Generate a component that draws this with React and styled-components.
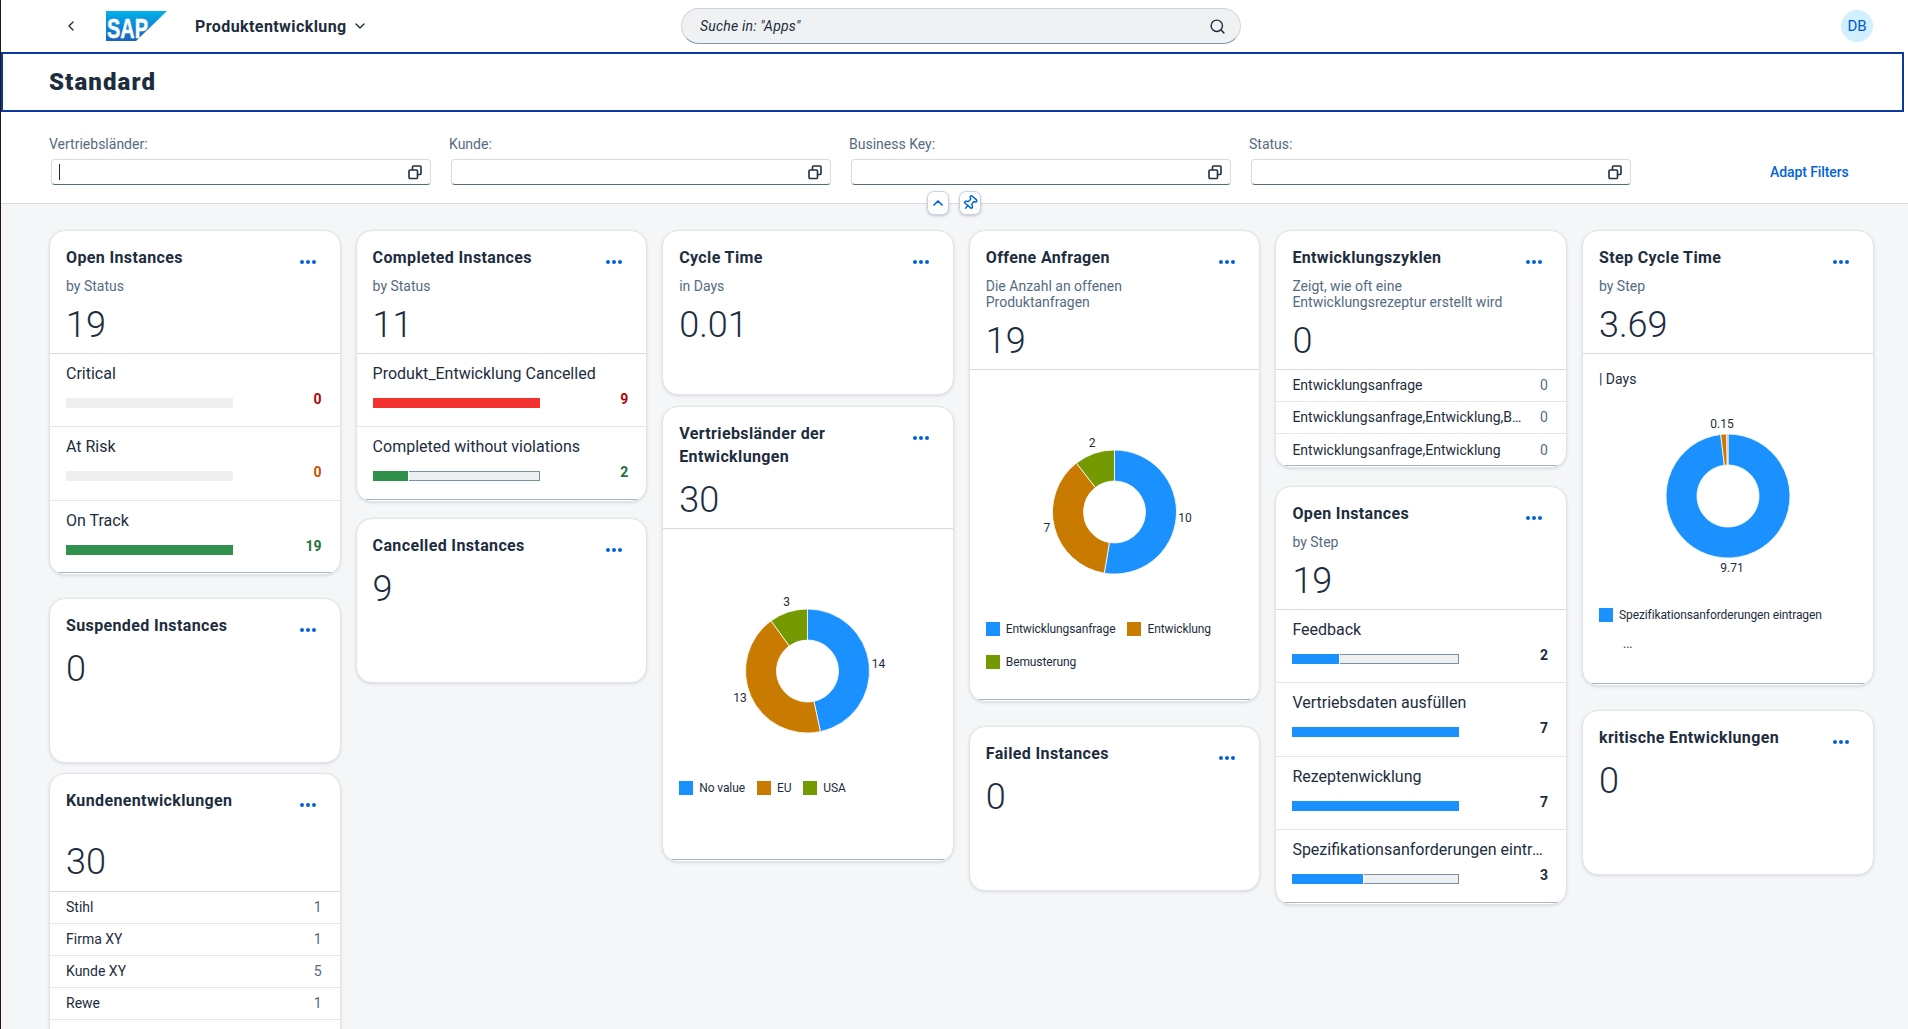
import React from "react";
import styled, { createGlobalStyle } from "styled-components";
import { ChevronLeft, ChevronDown, ChevronUp, Search, Pin } from "lucide-react";

const FONT = `Roboto, "Liberation Sans", Arial, sans-serif`;

const Global = createGlobalStyle`
  html, body { margin: 0; padding: 0; height: 100%; overflow: hidden; background: #f5f6f7; }
  body { font-family: ${FONT}; color: #1d2d3e; }
  * { box-sizing: border-box; }
`;

const Page = styled.div`
  width: 1908px; height: 1029px; overflow: hidden; background: #f5f6f7;
  border-left: 1px solid #2e1414; display: flex; flex-direction: column;
`;
const Shell = styled.header`
  height: 52px; flex: none; background: #fff; display: flex; align-items: center; position: relative;
`;
const BackBtn = styled.div`
  width: 18px; margin-left: 61px; display: flex; justify-content: center; color: #1d2d3e;
`;
const LogoWrap = styled.div`margin-left: 26px; height: 40px; display: flex;`;
const AppTitle = styled.div`
  margin-left: 28px; display: flex; align-items: center; gap: 5px; font-size: 16px; font-weight: 700; letter-spacing: .42px; color: #1d2d3e; width: 181px; white-space: nowrap;
`;
const SearchBox = styled.div`
  margin-left: 305px; width: 560px; height: 36px; border-radius: 18px; background: #eff1f2;
  border: 1px solid #d0d4d9; border-bottom-color: #8396a8; display: flex; align-items: center;
  justify-content: space-between; padding: 0 14px 0 18px;
`;
const SearchText = styled.span`font-size: 14px; font-style: italic; letter-spacing: .2px; color: #1d2d3e;`;
const Avatar = styled.div`
  margin-left: auto; margin-right: 35px; width: 32px; height: 32px; border-radius: 50%; background: #d1efff;
  color: #0057d2; font-size: 15px; display: flex; align-items: center; justify-content: center;
`;
const TitleBar = styled.div`
  height: 60px; flex: none; width: 1903px; background: #fff; border: 2px solid #0a3a9e; display: flex; align-items: center;
  padding-left: 46px; font-size: 24px; font-weight: 900; letter-spacing: 1.1px; color: #1d2d3e;
`;
const TitleTail = styled.div`height: 60px; width: 5px; background: #fff; flex: none;`;
const TitleRow = styled.div`display: flex; flex: none;`;
const FilterBar = styled.div`
  height: 92px; flex: none; background: #fff; border-bottom: 1px solid #d9dcdf; display: flex; padding: 23px 0 0 48px; position: relative;
`;
const Filter = styled.div`width: 400px; flex: none;`;
const FilterLabel = styled.div`font-size: 14px; line-height: 18px; color: #556b82;`;
const FilterInput = styled.div`
  margin: 6px 0 0 2px; width: 380px; height: 26px; background: #fff; border: 1px solid #d8dbe0; border-bottom-color: #556b82;
  border-radius: 4px; display: flex; align-items: center; justify-content: space-between; padding: 0 7px 0 7px;
`;
const Caret = styled.span`width: 1px; height: 16px; background: ${p => (p.$on ? "#1d2d3e" : "transparent")};`;
const AdaptBtn = styled.div`
  position: absolute; left: 1769px; top: 52px; font-size: 14px; font-weight: 500; letter-spacing: -.1px; color: #0064d9;
`;
const Toggles = styled.div`
  position: absolute; left: 926px; top: 79px; display: flex; gap: 10px;
`;
const ToggleBtn = styled.div`
  width: 22px; height: 24px; background: #fff; border: 1px solid #cdd3da; border-radius: 7px; color: #0064d9;
  box-shadow: 0 1px 3px rgba(85,107,130,.35); display: flex; align-items: center; justify-content: center;
`;
const Board = styled.main`display: flex; gap: 15px; padding: 26px 0 0 48px; flex: 1; min-height: 0;`;
const Column = styled.div`width: 291.6px; flex: none; display: flex; flex-direction: column;`;
const Card = styled.section`
  width: 100%; flex: none; height: ${p => p.$h}px; margin-top: ${p => p.$mt || 0}px; background: #fff; border-radius: 16px;
  border: 1px solid #e2e5e8; box-shadow: 0 1px 3px rgba(85,107,130,.2); overflow: hidden; position: relative;
  ${p => p.$line && `&::after { content: ""; position: absolute; left: 0; right: 0; bottom: 1px; height: 1px; background: #a9b4be; }`}
`;
const Head = styled.div`
  padding: 15px 16px 0; position: relative; border-bottom: ${p => (p.$div ? "1px solid #d9dcdf" : "none")};
  height: ${p => p.$h ? p.$h + "px" : "auto"};
`;
const CardTitle = styled.div`
  font-size: 16px; font-weight: 700; letter-spacing: .37px; line-height: 23px; color: #1d2d3e; width: 215px;
`;
const More = styled.div`
  position: absolute; top: 29px; right: 24px; display: flex; gap: 2px;
`;
const Dot = styled.span`width: 4px; height: 4px; border-radius: 50%; background: #0064d9;`;
const Sub = styled.div`
  margin-top: 9px; font-size: 14px; line-height: 16px; color: #556b82; width: 240px; min-height: ${p => p.$min || 0}px;
`;
const Num = styled.div`
  margin-top: ${p => p.$mt}px; font-size: 36px; font-weight: 300; line-height: 44px; color: #1d2d3e;
`;
const ProgRow = styled.div`
  height: 73.5px; padding: 8px 18px 0 16px; border-bottom: ${p => (p.$last ? "none" : "1px solid #e5e8ea")};
`;
const ProgLabel = styled.div`
  font-size: 16px; line-height: 23px; color: #1d2d3e; white-space: nowrap; overflow: hidden; text-overflow: ellipsis;
`;
const BarLine = styled.div`margin-top: 6px; display: flex; justify-content: space-between; align-items: flex-start;`;
const Track = styled.div`
  margin-top: 7px; width: 167px; height: 10px; background: ${p => (p.$empty ? "#efefef" : "#edeff0")}; display: flex;
  ${p => (p.$outline ? "box-shadow: inset 0 0 0 1px #788fa6;" : "")}
`;
const Fill = styled.div`height: 100%; background: ${p => p.$c}; border-right: ${p => (p.$gap ? "1px solid #fff" : "none")};`;
const Val = styled.div`font-size: 14px; font-weight: 700; line-height: 16px; color: ${p => p.$c};`;
const ListRow = styled.div`
  height: 32px; padding: 0 18px 0 16px; border-bottom: ${p => (p.$last ? "none" : "1px solid #e5e8ea")}; display: flex; align-items: center; justify-content: space-between; gap: 18px;
`;
const ListName = styled.span`font-size: 14px; white-space: nowrap; overflow: hidden; text-overflow: ellipsis; color: #1d2d3e;`;
const ListVal = styled.span`font-size: 14px; color: #556b82; flex: none;`;
const ChartWrap = styled.div`display: block;`;
const Legend = styled.div`
  display: flex; flex-wrap: wrap; gap: 19px 12px; padding: 0 16px; margin-top: ${p => p.$mt || 0}px;
`;
const LegendItem = styled.div`display: flex; align-items: center; gap: 6px; font-size: 12px; line-height: 14px; letter-spacing: -.1px; color: #1d2d3e;`;
const Swatch = styled.span`width: 14px; height: 14px; background: ${p => p.$c}; flex: none;`;
const DaysLabel = styled.div`padding: 16px 16px 0; font-size: 14px; line-height: 18px; color: #1d2d3e;`;
const Dots = styled.div`padding: 0 0 0 40px; margin-top: 15px; font-size: 12px; line-height: 14px; color: #1d2d3e;`;

const BLUE = "#1b90ff", ORANGE = "#c87b00", OLIVE = "#759900", PINK = "#f07bb0";

function SapLogo() {
  return (
    <svg width="61" height="40" viewBox="0 0 61 40">
      <defs>
        <linearGradient id="sapg" x1="0" y1="0" x2="0" y2="1">
          <stop offset="0" stopColor="#00b1eb" />
          <stop offset="1" stopColor="#1b61c0" />
        </linearGradient>
      </defs>
      <polygon points="0,5 61,5 30,35 0,35" fill="url(#sapg)" />
      <text x="1" y="32" fontFamily="'Liberation Sans', Arial, sans-serif" fontWeight="700" fontSize="28" fill="#fff" stroke="#fff" strokeWidth="0.5" textLength="41" lengthAdjust="spacingAndGlyphs">SAP</text>
    </svg>
  );
}

function ValueHelp() {
  return (
    <svg width="16" height="16" viewBox="0 0 16 16" fill="none" stroke="#1d2d3e" strokeWidth="1.6">
      <rect x="2" y="6" width="8.5" height="8.5" rx="1" />
      <path d="M5.5 6V3a1 1 0 0 1 1-1H13a1 1 0 0 1 1 1v6.5a1 1 0 0 1-1 1h-2.5" />
    </svg>
  );
}

function polar(cx, cy, r, a) {
  const t = (a - 90) * Math.PI / 180;
  return [cx + r * Math.cos(t), cy + r * Math.sin(t)];
}

function Donut({ data, labels, cy, height, cx = 144.5 }) {
  const R = 62, r = 31;
  const total = data.reduce((s, d) => s + d.v, 0);
  let acc = 0;
  return (
    <ChartWrap>
      <svg width="288" height={height} viewBox={`0 0 288 ${height}`} style={{ display: "block" }}>
        {data.map((d, i) => {
          const a0 = acc / total * 360;
          acc += d.v;
          const a1 = acc / total * 360;
          const large = a1 - a0 > 180 ? 1 : 0;
          const [x0, y0] = polar(cx, cy, R, a0);
          const [x1, y1] = polar(cx, cy, R, a1);
          const [x2, y2] = polar(cx, cy, r, a1);
          const [x3, y3] = polar(cx, cy, r, a0);
          return (
            <path key={i} fill={d.c} stroke="#fff" strokeWidth="0.8"
              d={`M${x0} ${y0}A${R} ${R} 0 ${large} 1 ${x1} ${y1}L${x2} ${y2}A${r} ${r} 0 ${large} 0 ${x3} ${y3}Z`} />
          );
        })}
        {labels.map((l, i) => (
          <text key={i} x={l.x} y={l.y} textAnchor="middle" fontFamily={FONT} fontSize="12" fill="#1d2d3e">{l.t}</text>
        ))}
      </svg>
    </ChartWrap>
  );
}

function TileHead({ title, sub, subMin, num, numMt, div, h }) {
  return (
    <Head $div={div} $h={h}>
      <CardTitle>{title}</CardTitle>
      <More><Dot /><Dot /><Dot /></More>
      {sub !== undefined && <Sub $min={subMin}>{sub}</Sub>}
      <Num $mt={numMt}>{num}</Num>
    </Head>
  );
}

function Prog({ label, pct, color, val, vc, last, empty }) {
  const outline = !empty && pct < 100;
  return (
    <ProgRow $last={last}>
      <ProgLabel>{label}</ProgLabel>
      <BarLine>
        <Track $empty={empty} $outline={outline}>
          {pct > 0 && <Fill $c={color} $gap={outline} style={{ width: `${pct}%` }} />}
        </Track>
        <Val $c={vc}>{val}</Val>
      </BarLine>
    </ProgRow>
  );
}

const FILTERS = ["Vertriebsländer:", "Kunde:", "Business Key:", "Status:"];
const GREEN = "#30914c", RED = "#f53232", TXT = "#1d2d3e";

export default function App() {
  return (
    <Page>
      <Global />
      <Shell>
        <BackBtn><ChevronLeft size={16} strokeWidth={2} /></BackBtn>
        <LogoWrap><SapLogo /></LogoWrap>
        <AppTitle>Produktentwicklung <ChevronDown size={16} strokeWidth={2} /></AppTitle>
        <SearchBox>
          <SearchText>Suche in: "Apps"</SearchText>
          <Search size={17} strokeWidth={2} color="#1d2d3e" />
        </SearchBox>
        <Avatar>DB</Avatar>
      </Shell>
      <TitleRow>
        <TitleBar>Standard</TitleBar>
        <TitleTail />
      </TitleRow>
      <FilterBar>
        {FILTERS.map((f, i) => (
          <Filter key={f}>
            <FilterLabel>{f}</FilterLabel>
            <FilterInput><Caret $on={i === 0} /><ValueHelp /></FilterInput>
          </Filter>
        ))}
        <AdaptBtn>Adapt Filters</AdaptBtn>
        <Toggles>
          <ToggleBtn><ChevronUp size={16} strokeWidth={2.5} /></ToggleBtn>
          <ToggleBtn><Pin size={16} strokeWidth={2.2} style={{ transform: "rotate(40deg)" }} /></ToggleBtn>
        </Toggles>
      </FilterBar>
      <Board>
        <Column>
          <Card $h={345} $line>
            <TileHead title="Open Instances" sub="by Status" num="19" numMt={9} div h={122.6} />
            <Prog label="Critical" pct={0} empty val="0" vc="#aa0808" />
            <Prog label="At Risk" pct={0} empty val="0" vc="#c35500" />
            <Prog label="On Track" pct={100} color={GREEN} val="19" vc="#256f3a" last />
          </Card>
          <Card $h={165} $mt={23}>
            <TileHead title="Suspended Instances" num="0" numMt={10} />
          </Card>
          <Card $h={400} $mt={10}>
            <TileHead title="Kundenentwicklungen" sub="" subMin={16} num="30" numMt={3} div h={117.6} />
            <ListRow><ListName>Stihl</ListName><ListVal>1</ListVal></ListRow>
            <ListRow><ListName>Firma XY</ListName><ListVal>1</ListVal></ListRow>
            <ListRow><ListName>Kunde XY</ListName><ListVal>5</ListVal></ListRow>
            <ListRow><ListName>Rewe</ListName><ListVal>1</ListVal></ListRow>
            <ListRow $last />
          </Card>
        </Column>
        <Column>
          <Card $h={272} $line>
            <TileHead title="Completed Instances" sub="by Status" num="11" numMt={9} div h={122.6} />
            <Prog label="Produkt_Entwicklung Cancelled" pct={100} color={RED} val="9" vc="#aa0808" />
            <Prog label="Completed without violations" pct={22} color={GREEN} val="2" vc="#256f3a" last />
          </Card>
          <Card $h={165} $mt={16}>
            <TileHead title="Cancelled Instances" num="9" numMt={10} />
          </Card>
        </Column>
        <Column>
          <Card $h={165}>
            <TileHead title="Cycle Time" sub="in Days" num="0.01" numMt={9} />
          </Card>
          <Card $h={456} $mt={11} $line>
            <TileHead title="Vertriebsländer der Entwicklungen" num="30" numMt={10} div h={122} />
            <Donut height={240} cy={142}
              data={[{ v: 14, c: BLUE }, { v: 13, c: ORANGE }, { v: 3, c: OLIVE }]}
              labels={[{ t: "14", x: 215.5, y: 139 }, { t: "13", x: 77, y: 173 }, { t: "3", x: 123.6, y: 77 }]} />
            <Legend $mt={12}>
              <LegendItem><Swatch $c={BLUE} />No value</LegendItem>
              <LegendItem><Swatch $c={ORANGE} />EU</LegendItem>
              <LegendItem><Swatch $c={OLIVE} />USA</LegendItem>
            </Legend>
          </Card>
        </Column>
        <Column>
          <Card $h={472} $line>
            <TileHead title="Offene Anfragen" sub={<>Die Anzahl an offenen<br />Produktanfragen</>} num="19" numMt={9} div h={139} />
            <Donut height={240} cy={142}
              data={[{ v: 10, c: BLUE }, { v: 7, c: ORANGE }, { v: 2, c: OLIVE }]}
              labels={[{ t: "10", x: 215, y: 152 }, { t: "7", x: 76.8, y: 162 }, { t: "2", x: 122, y: 77 }]} />
            <Legend $mt={12}>
              <LegendItem><Swatch $c={BLUE} />Entwicklungsanfrage</LegendItem>
              <LegendItem><Swatch $c={ORANGE} />Entwicklung</LegendItem>
              <LegendItem><Swatch $c={OLIVE} />Bemusterung</LegendItem>
            </Legend>
          </Card>
          <Card $h={165} $mt={24}>
            <TileHead title="Failed Instances" num="0" numMt={10} />
          </Card>
        </Column>
        <Column>
          <Card $h={238} $line>
            <TileHead title="Entwicklungszyklen" sub={<>Zeigt, wie oft eine<br />Entwicklungsrezeptur erstellt wird</>} num="0" numMt={9} div h={138.6} />
            <ListRow><ListName>Entwicklungsanfrage</ListName><ListVal>0</ListVal></ListRow>
            <ListRow><ListName>Entwicklungsanfrage,Entwicklung,Bemusterung</ListName><ListVal>0</ListVal></ListRow>
            <ListRow $last><ListName>Entwicklungsanfrage,Entwicklung</ListName><ListVal>0</ListVal></ListRow>
          </Card>
          <Card $h={419} $mt={18} $line>
            <TileHead title="Open Instances" sub="by Step" num="19" numMt={9} div h={122.6} />
            <Prog label="Feedback" pct={28.5} color={BLUE} val="2" vc={TXT} />
            <Prog label="Vertriebsdaten ausfüllen" pct={100} color={BLUE} val="7" vc={TXT} />
            <Prog label="Rezeptenwicklung" pct={100} color={BLUE} val="7" vc={TXT} />
            <Prog label="Spezifikationsanforderungen eintragen" pct={43} color={BLUE} val="3" vc={TXT} last />
          </Card>
        </Column>
        <Column>
          <Card $h={456} $line>
            <TileHead title="Step Cycle Time" sub="by Step" num="3.69" numMt={9} div h={122.6} />
            <DaysLabel>| Days</DaysLabel>
            <Donut height={220} cy={108} cx={145}
              data={[{ v: 9.71, c: BLUE }, { v: 0.15, c: ORANGE }, { v: 0.035, c: PINK }]}
              labels={[{ t: "0.15", x: 139, y: 40 }, { t: "9.71", x: 149, y: 184 }]} />
            <Legend>
              <LegendItem><Swatch $c={BLUE} />Spezifikationsanforderungen eintragen</LegendItem>
            </Legend>
            <Dots>...</Dots>
          </Card>
          <Card $h={165} $mt={24}>
            <TileHead title="kritische Entwicklungen" num="0" numMt={10} />
          </Card>
        </Column>
      </Board>
    </Page>
  );
}
